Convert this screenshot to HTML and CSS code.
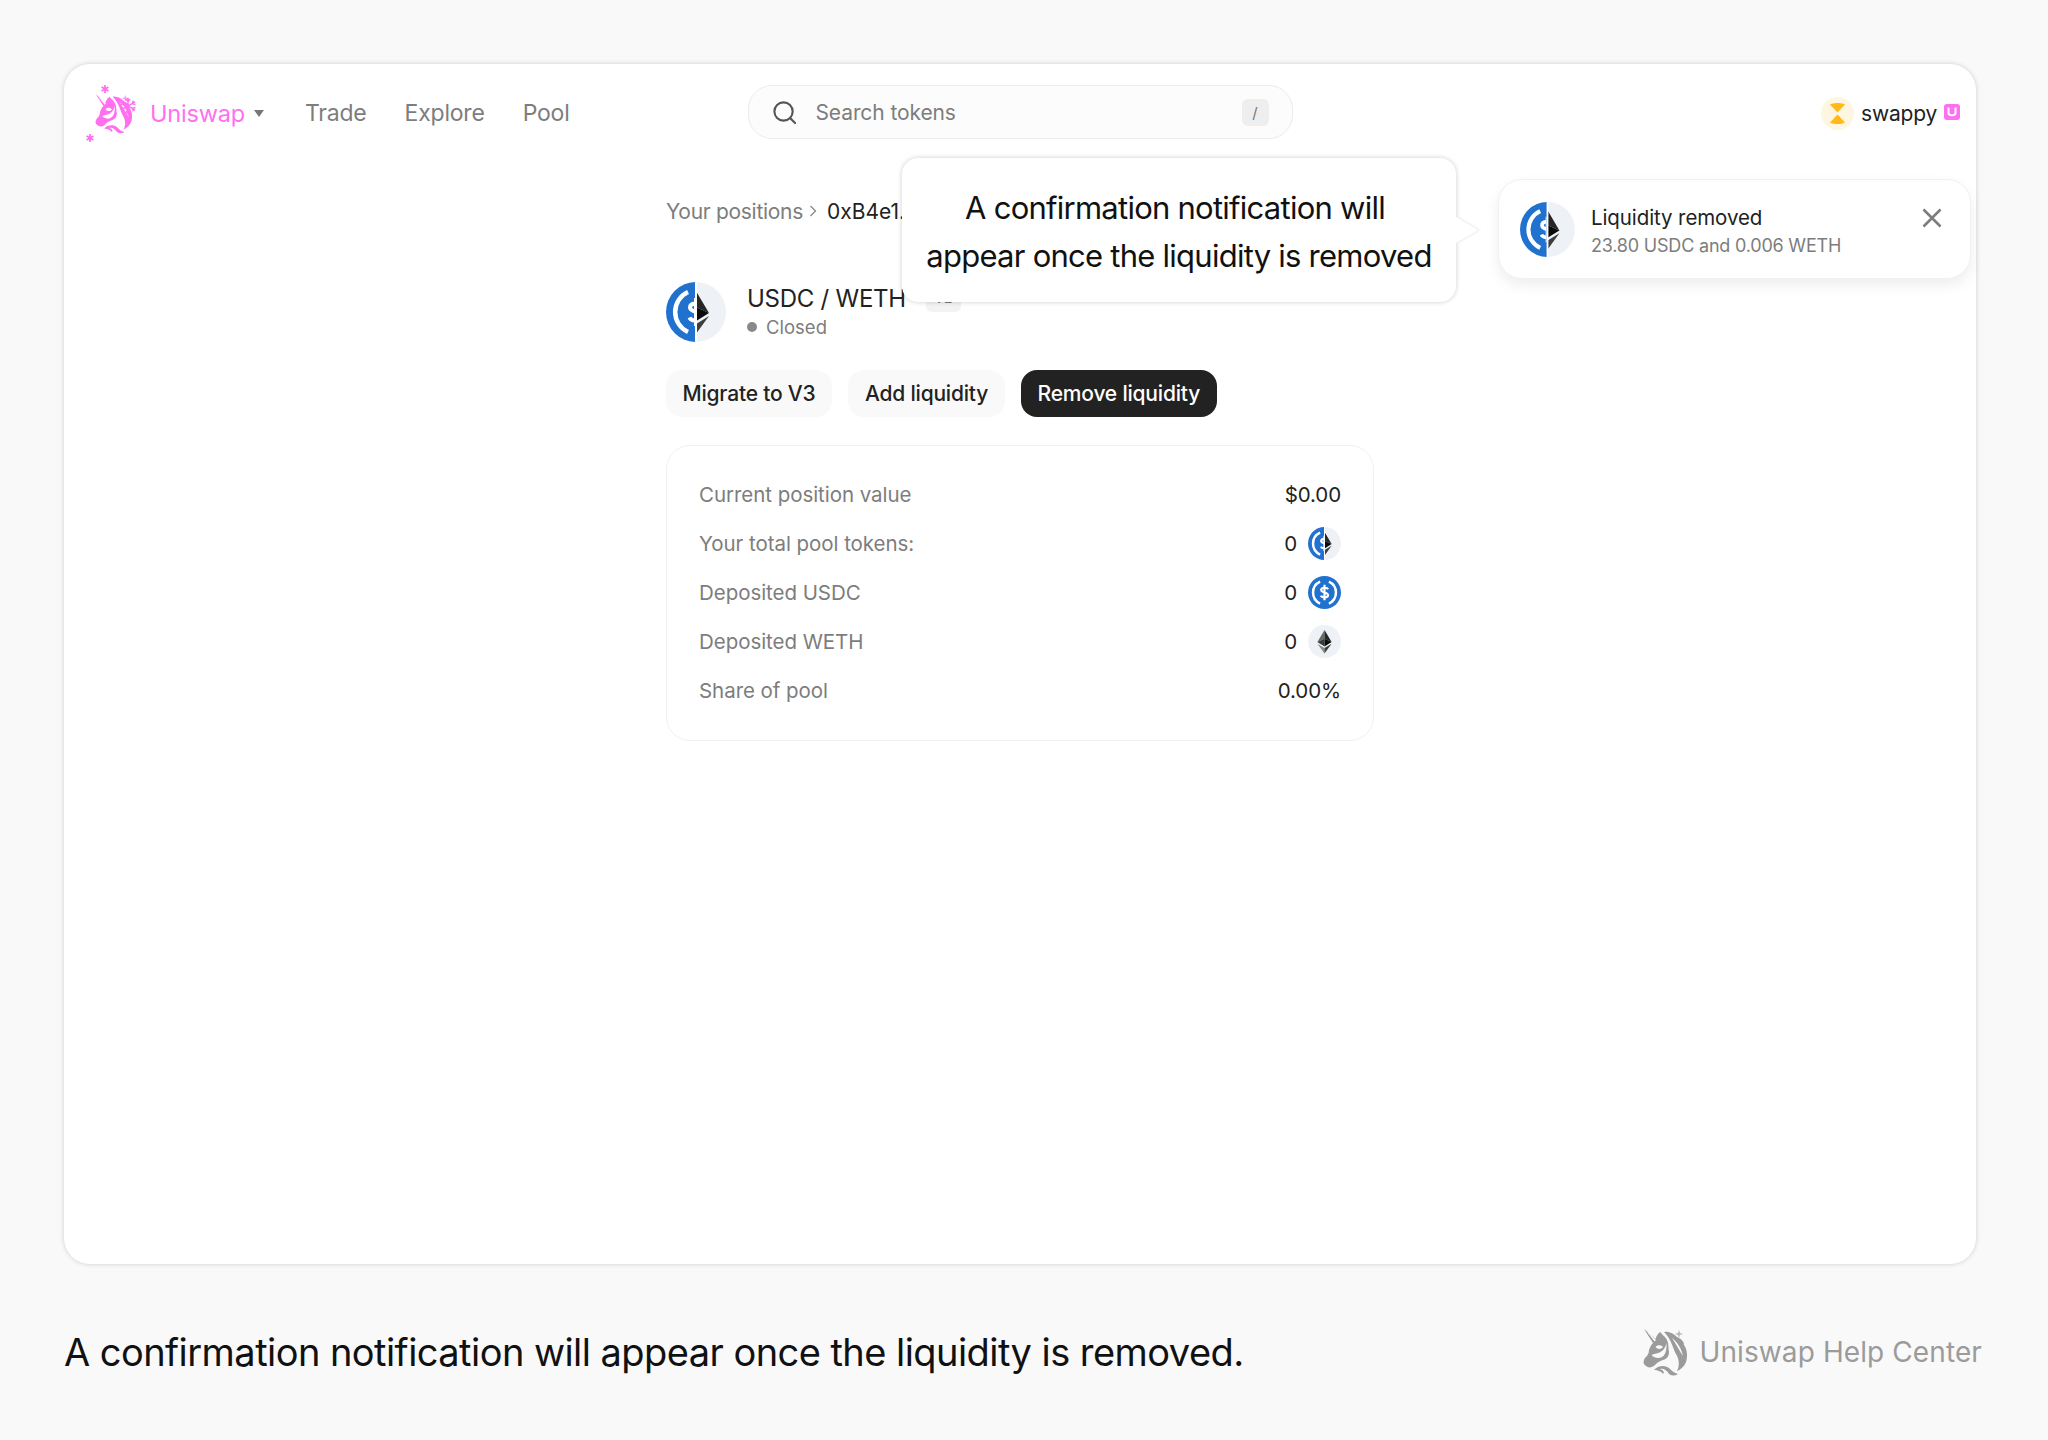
FILE: index.html
```html
<!DOCTYPE html>
<html lang="en">
<head>
<meta charset="utf-8">
<title>Uniswap Help Center</title>
<link rel="stylesheet" href="styles.css">
</head>
<body>
<svg class="defs" width="0" height="0" aria-hidden="true">
  <defs>
    <clipPath id="clip-left"><rect x="0" y="0" width="29" height="60"/></clipPath>
    <clipPath id="clip-right"><rect x="31" y="0" width="29" height="60"/></clipPath>
    <symbol id="unicorn" viewBox="0 0 44 47">
      <path fill-rule="evenodd" d="M1 0 L12.500 10 C13.500 7 15 4 17.500 3 C19 6 22 7 24 11 C26 15 25 19 26 23 C26 27 24 30 20 31 C17 32 15 33 12 36 C9 39 5 39 3 37 C0 35 0 32 2 29 C4 27 6 25 6 21 C7 18 8 16 10 14 Z M12.500 18 C14 15.500 18 15.500 20 18 C18 20.500 14.500 20.500 12.500 18 Z M8.500 26 C13 24 21 25 23.500 14 C24 24 21 29 15 29 C12.500 29 10 28 8.500 26 Z M3 1.500 L11.500 12.500 L13 11 Z"/>
      <path fill-rule="evenodd" d="M21 3 C26 2 31 5 34 8 C38 10 41 12 41 16 C44 20 45 27 43 33 C41 38 37 41 34 42 C37 36 36 30 33 25 C30 20 29 11 21 3 Z M29 9 C34 13 38 18 40 27 C36 21 33 15 29 9 Z"/>
      <path d="M11 41 C15 36 22 36 26 39 C29 42 31 44 35 45 C32 47 29 47 26 45 C24 41 20 39 17 40 C20 41 22 43 20 45 C19 43 15 41 11 41 Z"/>
      <path d="M36 1 L37 4 L40 5 L37 6 L36 9 L35 6 L32 5 L35 4 Z" opacity=".7"/>
    </symbol>
    <symbol id="usdc-art" viewBox="0 0 60 60">
      <circle cx="30" cy="30" r="30" fill="#2172ce"/>
      <path d="M22 10 A22 22 0 0 0 22 50 M38 10 A22 22 0 0 1 38 50" fill="none" stroke="#fff" stroke-width="4.500"/>
      <path d="M36.500 24 C35 20.500 24 20 24 25.500 C24 31 36.500 29 36.500 35 C36.500 40 25 39.500 23.500 35.500 M30 16 V44" fill="none" stroke="#fff" stroke-width="4"/>
    </symbol>
    <symbol id="eth-art" viewBox="0 0 60 60">
      <polygon points="30,9 17,31 30,25" fill="#6b6b6b"/>
      <polygon points="30,9 43,31 30,25" fill="#262626"/>
      <polygon points="17,31 30,25 30,39" fill="#3a3a3a"/>
      <polygon points="43,31 30,25 30,39" fill="#0b0b0b"/>
      <polygon points="17,34 30,42 30,52" fill="#8a8a8a"/>
      <polygon points="43,34 30,42 30,52" fill="#3e3e3e"/>
    </symbol>
    <symbol id="pair" viewBox="0 0 60 60">
      <g clip-path="url(#clip-left)"><use href="#usdc-art" width="60" height="60"/></g>
      <g clip-path="url(#clip-right)">
        <circle cx="30" cy="30" r="30" fill="#eef2f7"/>
        <use href="#eth-art" width="60" height="60"/>
      </g>
    </symbol>
    <symbol id="flake" viewBox="0 0 24 24">
      <path d="M12 1 V23 M2.500 6.500 L21.500 17.500 M21.500 6.500 L2.500 17.500 M9 3 L12 6 L15 3 M9 21 L12 18 L15 21 M2 10 L6 9 L5 5 M22 14 L18 15 L19 19 M22 10 L18 9 L19 5 M2 14 L6 15 L5 19" fill="none" stroke="currentColor" stroke-width="2"/>
    </symbol>
    <symbol id="spark" viewBox="0 0 10 10">
      <path d="M5 0 V10 M.7 2.500 L9.300 7.500 M9.300 2.500 L.7 7.500" stroke="currentColor" stroke-width="2.200" fill="none"/>
    </symbol>
  </defs>
</svg>

<div class="page">
  <section class="card">
    <header class="nav">
      <div class="nav-left">
        <div class="logo">
          <svg class="logo-head"><use href="#unicorn"/></svg>
          <svg class="logo-flake"><use href="#flake"/></svg>
          <svg class="logo-spark-top"><use href="#spark"/></svg>
          <svg class="logo-spark-bottom"><use href="#spark"/></svg>
        </div>
        <span class="brand">Uniswap</span>
        <span class="caret"></span>
        <nav class="links">
          <a>Trade</a>
          <a>Explore</a>
          <a>Pool</a>
        </nav>
      </div>
      <div class="search">
        <svg class="search-icon" viewBox="0 0 26 26"><circle cx="12" cy="12" r="9.500" fill="none" stroke="currentColor" stroke-width="2.200"/><path d="M19 19 L24 24" stroke="currentColor" stroke-width="2.200" stroke-linecap="round"/></svg>
        <span class="search-text">Search tokens</span>
        <span class="slash">/</span>
      </div>
      <div class="nav-right">
        <svg class="avatar" viewBox="0 0 33 33">
          <circle cx="16.500" cy="16.500" r="16.500" fill="#fff6e2"/>
          <path d="M9 7.500 C13 5.500 20 5.500 24 7.500 L16.500 15.500 Z M9 25.500 C13 27.500 20 27.500 24 25.500 L16.500 17.500 Z" fill="#ffb91a"/>
        </svg>
        <span class="account">swappy</span>
        <svg class="uni-badge" viewBox="0 0 16 16">
          <rect width="16" height="16" rx="3" fill="#ff6ff0"/>
          <path d="M4.500 3.500 V9 C4.500 12 11.500 12 11.500 9 V3.500" fill="none" stroke="#fff" stroke-width="2"/>
        </svg>
      </div>
    </header>

    <main class="content">
      <div class="crumbs">
        <span class="crumb-muted">Your positions</span>
        <svg class="crumb-chevron" viewBox="0 0 8 12"><path d="M1.500 1 L6.500 6 L1.500 11" fill="none" stroke="currentColor" stroke-width="1.300"/></svg>
        <span class="crumb-current">0xB4e1...</span>
      </div>
      <div class="position-head">
        <svg class="pair-large"><use href="#pair"/></svg>
        <div class="position-title">
          <div class="pair-line">
            <span class="pair-name">USDC / WETH</span>
            <span class="version">V2</span>
          </div>
          <div class="status"><span class="status-dot"></span>Closed</div>
        </div>
      </div>
      <div class="actions">
        <button class="btn">Migrate to V3</button>
        <button class="btn">Add liquidity</button>
        <button class="btn btn-dark">Remove liquidity</button>
      </div>
      <div class="panel">
        <div class="row"><span class="row-label">Current position value</span><span class="row-value">$0.00</span></div>
        <div class="row"><span class="row-label">Your total pool tokens:</span><span class="row-value">0<svg class="token"><use href="#pair"/></svg></span></div>
        <div class="row"><span class="row-label">Deposited USDC</span><span class="row-value">0<svg class="token"><use href="#usdc-art"/></svg></span></div>
        <div class="row"><span class="row-label">Deposited WETH</span><span class="row-value">0<span class="eth-token"><svg class="token"><use href="#eth-art"/></svg></span></span></div>
        <div class="row"><span class="row-label">Share of pool</span><span class="row-value">0.00%</span></div>
      </div>
    </main>

    <aside class="callout">A confirmation notification will&nbsp;<br>appear once the liquidity is removed</aside>

    <aside class="toast">
      <svg class="toast-icon"><use href="#pair"/></svg>
      <div class="toast-text">
        <div class="toast-title">Liquidity removed</div>
        <div class="toast-sub">23.80 USDC and 0.006 WETH</div>
      </div>
      <svg class="toast-close" viewBox="0 0 20 20"><path d="M1.500 1.500 L18.500 18.500 M18.500 1.500 L1.500 18.500" stroke="currentColor" stroke-width="2.600" fill="none"/></svg>
    </aside>
  </section>

  <footer class="footer">
    <p class="caption">A confirmation notification will appear once the liquidity is removed.</p>
    <div class="help">
      <svg class="help-logo"><use href="#unicorn"/></svg>
      <span>Uniswap Help Center</span>
    </div>
  </footer>
</div>
</body>
</html>
```

FILE: styles.css
```css
* { box-sizing: border-box; }
html, body { margin: 0; padding: 0; }
body {
  background: #f9f9f9;
  font-family: Inter, "Liberation Sans", sans-serif;
  color: #222;
  width: 2048px;
  height: 1440px;
  overflow: hidden;
}
.defs { position: absolute; }
.page { padding: 64px 72px 0 64px; }

.card {
  position: relative;
  height: 1200px;
  background: #fff;
  border-radius: 26px;
  box-shadow: 0 0 5px rgba(0, 0, 0, .18);
  display: flex;
  flex-direction: column;
}

.nav {
  display: grid;
  grid-template-columns: 1fr 545px 1fr;
  align-items: center;
  padding: 21px 16px;
}
.nav-left { display: flex; align-items: center; padding-left: 5px; }
.logo { position: relative; width: 53px; height: 56px; color: #ff6ff0; fill: #ff6ff0; margin-right: 12px; }
.logo-head { position: absolute; left: 10px; top: 9px; width: 37px; height: 40px; }
.logo-flake { position: absolute; left: 34px; top: 12px; width: 18px; height: 18px; }
.logo-spark-top { position: absolute; left: 16px; top: 0; width: 8px; height: 8px; }
.logo-spark-bottom { position: absolute; left: 1px; top: 49px; width: 8px; height: 8px; }
.brand { font-size: 23.500px; color: #ff6ff0; letter-spacing: -.2px; }
.caret {
  width: 0; height: 0; margin-left: 9px;
  border-left: 5px solid transparent;
  border-right: 5px solid transparent;
  border-top: 7px solid #777;
}
.links { display: flex; gap: 38px; margin-left: 41px; font-size: 23px; color: #7d7d7d; letter-spacing: -.2px; }

.search {
  height: 54px;
  margin-bottom: 2px;
  display: flex;
  align-items: center;
  padding: 0 23px;
  border: 1.500px solid #ececec;
  border-radius: 24px;
  background: #fcfcfc;
  color: #666;
}
.search-icon { width: 25px; height: 25px; flex: none; color: #555; }
.search-text { margin-left: 19px; font-size: 21px; color: #7d7d7d; flex: 1; letter-spacing: -.1px; }
.slash {
  width: 27px; height: 27px; border-radius: 6px;
  background: #eee; color: #777;
  font-size: 15px; text-align: center; line-height: 27px;
}

.nav-right { display: flex; align-items: center; justify-content: flex-end; }
.avatar { width: 33px; height: 33px; }
.account { font-size: 21px; margin-left: 7px; color: #222; letter-spacing: -.2px; }
.uni-badge { width: 16px; height: 16px; margin-left: 7px; margin-top: -2px; }

.content { width: 708px; margin: 0 auto; padding-top: 36px; }
.crumbs { display: flex; align-items: center; height: 26px; font-size: 21px; }
.crumb-muted { color: #7d7d7d; letter-spacing: -.3px; }
.crumb-chevron { width: 8px; height: 12px; margin: 0 10px 0 6px; color: #888; }
.crumb-current { color: #222; }

.position-head { display: flex; align-items: center; margin-top: 58px; }
.pair-large { width: 60px; height: 60px; flex: none; }
.position-title { margin-left: 21px; }
.pair-line { display: flex; align-items: center; height: 28px; margin-top: -2px; }
.pair-name { font-size: 24px; color: #222; letter-spacing: -.25px; }
.version {
  margin-left: 20px; width: 35px; height: 28px; border-radius: 6px;
  background: #f3f3f3; color: #777; font-size: 14px; text-align: center; line-height: 28px;
}
.status { display: flex; align-items: center; margin-top: 4px; font-size: 18.500px; color: #7d7d7d; }
.status-dot { width: 10px; height: 10px; border-radius: 50%; background: #8a8a8a; margin-right: 9px; }

.actions { display: flex; gap: 16.500px; margin-top: 28px; }
.btn {
  height: 47px; padding: 0 16.500px;
  border: 0; border-radius: 16px;
  background: #f9f9f9; color: #222;
  font: 500 21px Inter, "Liberation Sans", sans-serif;
  letter-spacing: -.2px;
}
.btn-dark { background: #222; color: #fff; }

.panel {
  margin-top: 28px;
  height: 296px;
  padding: 32px;
  border: 1px solid #f1f1f1;
  border-radius: 24px;
  display: flex;
  flex-direction: column;
  gap: 17px;
}
.row { display: flex; align-items: center; justify-content: space-between; height: 32px; font-size: 20.500px; }
.row-label { color: #7d7d7d; letter-spacing: -.05px; }
.row-value { display: flex; align-items: center; color: #222; letter-spacing: -.1px; }
.token { width: 33px; height: 33px; margin-left: 11px; display: block; }
.eth-token { display: block; margin-left: 11px; border-radius: 50%; background: #eef2f7; }
.eth-token .token { margin-left: 0; }

.callout {
  position: absolute;
  left: 838px;
  top: 94px;
  width: 554px;
  height: 144px;
  padding: 26px 0 0;
  background: #fff;
  border-radius: 16px;
  box-shadow: 0 0 5px rgba(0, 0, 0, .2);
  font-size: 31px;
  line-height: 48px;
  text-align: center;
  color: #111;
  letter-spacing: -.75px;
}
.callout::after {
  content: "";
  position: absolute;
  right: -22px;
  top: 59px;
  width: 0; height: 0;
  border-top: 13px solid transparent;
  border-bottom: 13px solid transparent;
  border-left: 22px solid #fff;
  filter: drop-shadow(2px 0 1px rgba(0, 0, 0, .08));
}

.toast {
  position: absolute;
  left: 1434px;
  top: 115px;
  width: 473px;
  height: 100px;
  display: flex;
  align-items: center;
  padding: 0 28px 0 21px;
  background: #fff;
  border: 1px solid #f1f1f1;
  border-radius: 24px;
  box-shadow: 0 6px 14px rgba(0, 0, 0, .07);
}
.toast-icon { width: 55px; height: 55px; flex: none; }
.toast-text { margin-left: 16px; flex: 1; padding-top: 5px; }
.toast-title { font-size: 20.500px; color: #222; line-height: 28px; letter-spacing: -.1px; }
.toast-sub { font-size: 18px; color: #7d7d7d; line-height: 26px; margin-top: 1px; letter-spacing: -.2px; }
.toast-close { width: 20px; height: 20px; color: #7d7d7d; align-self: flex-start; margin-top: 28px; }

.footer { display: flex; align-items: center; justify-content: space-between; height: 176px; margin-right: -6px; }
.caption { margin: 0; font-size: 38px; color: #111; letter-spacing: -.55px; }
.help { display: flex; align-items: center; color: #9b9b9b; font-size: 28px; letter-spacing: .1px; fill: #9b9b9b; }
.help-logo { width: 44px; height: 47px; margin-right: 12px; }
```
